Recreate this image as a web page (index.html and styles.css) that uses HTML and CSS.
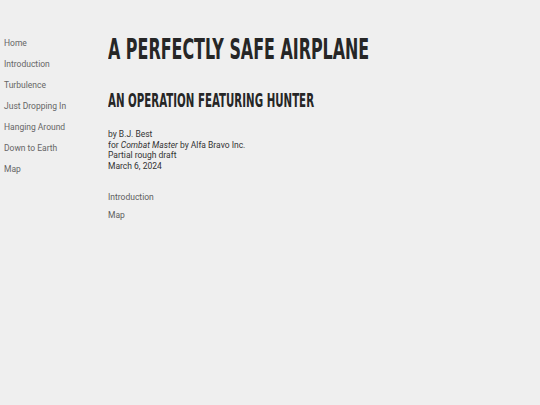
FILE: index.html
```html
<!DOCTYPE html>
<html>
<head>
<meta charset="utf-8">
<link rel="stylesheet" href="styles.css">
</head>
<body>
<div class="page">
  <nav class="nav">
    <a href="#">Home</a>
    <a href="#">Introduction</a>
    <a href="#">Turbulence</a>
    <a href="#">Just Dropping In</a>
    <a href="#">Hanging Around</a>
    <a href="#">Down to Earth</a>
    <a href="#">Map</a>
  </nav>
  <main class="main">
    <h1 class="title">A Perfectly Safe Airplane</h1>
    <h2 class="subtitle">An Operation Featuring Hunter</h2>
    <div class="meta">
      <div>by B.J. Best</div>
      <div>for <em>Combat Master</em> by Alfa Bravo Inc.</div>
      <div>Partial rough draft</div>
      <div>March 6, 2024</div>
    </div>
    <div class="links">
      <a href="#">Introduction</a>
      <a href="#">Map</a>
    </div>
  </main>
</div>
</body>
</html>
```
FILE: styles.css
```css
html, body { margin: 0; padding: 0; background: #efefef; }
body { font-family: Roboto, "Liberation Sans", sans-serif; color: #333; font-size: 8.5px; }
.page { display: flex; }
.nav { flex: 0 0 104px; padding-left: 4px; padding-top: 38px; display: flex; flex-direction: column; gap: 10px; white-space: nowrap; }
.nav a { color: #666; text-decoration: none; line-height: 11px; }
.main { flex: 1 1 auto; min-width: 0; overflow: hidden; display: flex; flex-direction: column; align-items: flex-start; padding-top: 35px; }
.title, .subtitle { font-family: "DejaVu Sans", sans-serif; font-stretch: condensed; font-weight: 700; text-transform: uppercase; color: #262626; margin: 0; white-space: nowrap; transform-origin: left center; }
.title { font-size: 29px; line-height: 28px; transform: scaleX(0.61); }
.subtitle { font-size: 19px; line-height: 18px; margin-top: 28px; transform: scaleX(0.6); }
.meta { margin-top: 20px; line-height: 10.7px; }
.links { margin-top: 20.5px; display: flex; flex-direction: column; gap: 7px; }
.links a { color: #5e5e5e; text-decoration: none; line-height: 11px; }
```
